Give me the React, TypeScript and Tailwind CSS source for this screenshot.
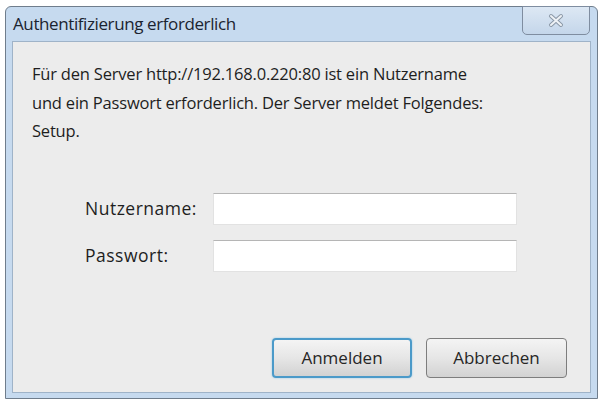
const font = { fontFamily: '"Open Sans", "Noto Sans", sans-serif' };

export default function App() {
  return (
    <div className="w-[601px] h-[403px] bg-white pl-[5px] pt-[6px]" style={font}>
      {/* window */}
      <div className="relative w-[593px] h-[393px] rounded-t-[6px] border border-[#6f7d8c] bg-[#c6daef] flex flex-col">
        {/* title bar */}
        <div className="h-[34px] flex items-center pl-[7px] text-[17px] text-[#1b2430] tracking-[-0.4px]">
          Authentifizierung erforderlich
        </div>
        <div className="absolute right-[7px] top-[-1px] w-[68px] h-[29px] rounded-b-[5px] border border-[#7f8da0] bg-gradient-to-b from-[#dde8f4] to-[#c4d6ea] flex items-center justify-center">
          <svg width="18" height="15" viewBox="0 0 18 15">
            <path d="M4 3 L14 12 M14 3 L4 12" stroke="#8a97a6" strokeWidth="4" strokeLinecap="round" fill="none" />
            <path d="M4 3 L14 12 M14 3 L4 12" stroke="#eef2f6" strokeWidth="2" strokeLinecap="round" fill="none" />
          </svg>
        </div>
        {/* content frame */}
        <div className="flex-1 px-[6px] pb-[5px]">
          <div className="h-full border border-[#9fb3c8] bg-[#ececec] flex flex-col">
            <p className="pl-[19px] pt-[18px] text-[16.5px] leading-[28.5px] text-[#1e1e1e] tracking-[-0.2px]">
              Für den Server http://192.168.0.220:80 ist ein Nutzername
              <br />
              und ein Passwort erforderlich. Der Server meldet Folgendes:
              <br />
              Setup.
            </p>
            <div className="mt-[47px] pl-[72px] grid grid-cols-[128px_304px] gap-y-[15px] items-center text-[17.5px] text-[#1e1e1e] tracking-[0.5px]">
              <span>Nutzername:</span>
              <div className="h-[32px] bg-white border border-[#e2e2e2] border-t-[#b5b5b5]" />
              <span>Passwort:</span>
              <div className="h-[32px] bg-white border border-[#e2e2e2] border-t-[#b5b5b5]" />
            </div>
            <div className="mt-auto mb-[14px] mr-[23px] flex justify-end gap-[14px]">
              <button className="w-[140px] h-[40px] rounded-[4px] border-2 border-[#4b9ac9] bg-gradient-to-b from-[#f4f4f4] via-[#e6e6e6] to-[#d2d2d2] text-[17px] font-medium text-[#262626] shadow-[0_0_2px_#8cc4e6]">
                Anmelden
              </button>
              <button className="w-[141px] h-[40px] rounded-[4px] border border-[#7d7d7d] bg-gradient-to-b from-[#f4f4f4] via-[#e6e6e6] to-[#d2d2d2] text-[17px] font-medium text-[#262626]">
                Abbrechen
              </button>
            </div>
          </div>
        </div>
      </div>
    </div>
  );
}
